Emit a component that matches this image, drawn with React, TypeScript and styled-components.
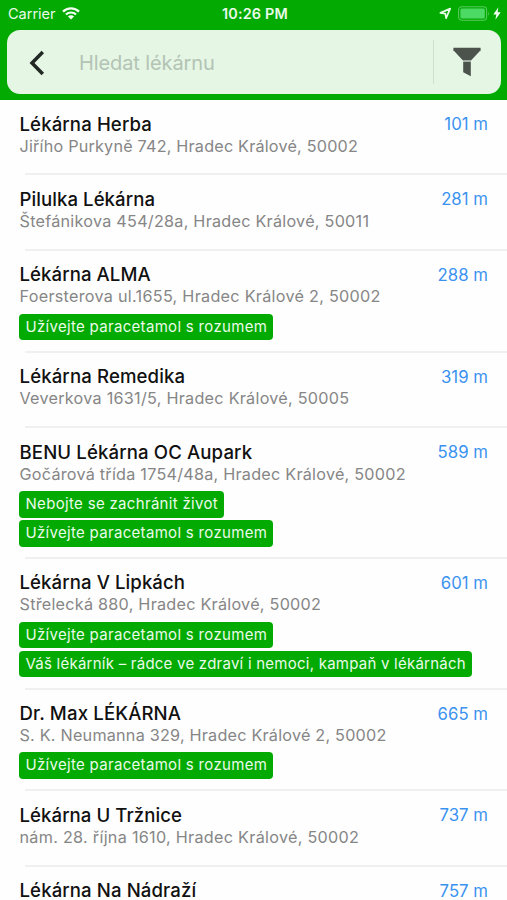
import React from 'react';
import styled, { createGlobalStyle } from 'styled-components';

const GlobalStyle = createGlobalStyle`
  * { box-sizing: border-box; }
  body {
    margin: 0;
    background: #fff;
    font-family: Inter, 'Liberation Sans', sans-serif;
    overflow: hidden;
  }
`;

const Screen = styled.div`
  width: 507px;
  height: 900px;
  overflow: hidden;
  background: #fefefe;
`;

const Header = styled.header`
  height: 100px;
  background: #02aa02;
  padding: 0 6px 0 7px;
`;

const StatusBar = styled.div`
  display: grid;
  grid-template-columns: 1fr auto 1fr;
  align-items: center;
  height: 30px;
  padding: 0 0 3px 1px;
  color: #e9fbe9;
  font-size: 14.6px;
  line-height: 18px;
`;

const Carrier = styled.div`
  display: flex;
  align-items: center;
  gap: 6px;
  letter-spacing: -0.05px;
`;

const Clock = styled.div`
  padding-left: 1px;
  font-weight: 600;
  font-size: 14.4px;
  letter-spacing: 0.2px;
`;

const StatusIcons = styled.div`
  display: flex;
  justify-content: flex-end;
  align-items: center;
`;

const BatterySlot = styled.span`
  display: flex;
  margin: 0 3px 0 6px;
`;

const SearchBar = styled.div`
  display: flex;
  align-items: center;
  height: 64px;
  border-radius: 13px;
  background: #e5f6e5;
`;

const BackButton = styled.button`
  width: 60px;
  height: 64px;
  padding: 1px 1px 0 0;
  border: 0;
  background: none;
  display: flex;
  align-items: center;
  justify-content: center;
`;

const Placeholder = styled.div`
  flex: 1;
  padding: 1px 0 0 12px;
  color: #b3c3b4;
  font-size: 20px;
  letter-spacing: -0.1px;
`;

const Filter = styled.div`
  width: 68px;
  height: 44px;
  padding-right: 2px;
  border-left: 1px solid #d0e0d0;
  display: flex;
  align-items: center;
  justify-content: center;
`;

const List = styled.ul`
  margin: 0;
  padding: 0;
  list-style: none;
`;

const Row = styled.li<{ $tags: number }>`
  height: ${(p) => (p.$tags === 0 ? 75.4 : 72.8 + p.$tags * 29)}px;
  padding: 12.6px 19px 0 19px;
  background: linear-gradient(#f0f0f0, #f0f0f0) 25px 100% / 100% 2px no-repeat;
`;

const RowTop = styled.div`
  display: flex;
  justify-content: space-between;
  height: 23px;
  line-height: 23px;
`;

const Name = styled.div<{ $spacing: number }>`
  padding-left: 0.5px;
  color: #111;
  font-size: 18.6px;
  font-weight: 500;
  letter-spacing: ${(p) => p.$spacing}px;
  white-space: nowrap;
`;

const Distance = styled.div`
  padding-top: 0.5px;
  color: #3a92f0;
  font-size: 16.8px;
`;

const Address = styled.div<{ $spacing: number }>`
  height: 21px;
  padding-left: 0.5px;
  line-height: 21px;
  color: #868686;
  font-size: 16.2px;
  letter-spacing: ${(p) => p.$spacing}px;
  white-space: nowrap;
`;

const Tags = styled.div`
  display: flex;
  flex-direction: column;
  align-items: flex-start;
  gap: 2.2px;
  padding-top: 6.3px;
`;

const Tag = styled.span<{ $spacing: number }>`
  height: 26.8px;
  line-height: 26.5px;
  padding: 0 6px 0 6.5px;
  border-radius: 4px;
  background: #02aa02;
  color: #eafbe9;
  font-size: 15px;
  letter-spacing: ${(p) => p.$spacing}px;
  white-space: nowrap;
`;

type Pharmacy = {
  name: string;
  address?: string;
  distance: string;
  tags?: string[];
  nameSpacing: number;
  addressSpacing?: number;
};

const PARACETAMOL = 'Užívejte paracetamol s rozumem';
const SAVE_LIFE = 'Nebojte se zachránit život';
const CAMPAIGN = 'Váš lékárník – rádce ve zdraví i nemoci, kampaň v lékárnách';

const tagSpacing: Record<string, number> = {
  [PARACETAMOL]: 0.31,
  [SAVE_LIFE]: 0.32,
  [CAMPAIGN]: 0.24,
};

const pharmacies: Pharmacy[] = [
  { name: 'Lékárna Herba', address: 'Jiřího Purkyně 742, Hradec Králové, 50002', distance: '101 m', nameSpacing: 0.11, addressSpacing: 0.2 },
  { name: 'Pilulka Lékárna', address: 'Štefánikova 454/28a, Hradec Králové, 50011', distance: '281 m', nameSpacing: 0.06, addressSpacing: 0.25 },
  { name: 'Lékárna ALMA', address: 'Foersterova ul.1655, Hradec Králové 2, 50002', distance: '288 m', tags: [PARACETAMOL], nameSpacing: 0.07, addressSpacing: 0.28 },
  { name: 'Lékárna Remedika', address: 'Veverkova 1631/5, Hradec Králové, 50005', distance: '319 m', nameSpacing: 0.12, addressSpacing: 0.26 },
  { name: 'BENU Lékárna OC Aupark', address: 'Gočárová třída 1754/48a, Hradec Králové, 50002', distance: '589 m', tags: [SAVE_LIFE, PARACETAMOL], nameSpacing: 0.12, addressSpacing: 0.24 },
  { name: 'Lékárna V Lipkách', address: 'Střelecká 880, Hradec Králové, 50002', distance: '601 m', tags: [PARACETAMOL, CAMPAIGN], nameSpacing: 0.08, addressSpacing: 0.25 },
  { name: 'Dr. Max LÉKÁRNA', address: 'S. K. Neumanna 329, Hradec Králové 2, 50002', distance: '665 m', tags: [PARACETAMOL], nameSpacing: 0.13, addressSpacing: 0.22 },
  { name: 'Lékárna U Tržnice', address: 'nám. 28. října 1610, Hradec Králové, 50002', distance: '737 m', nameSpacing: 0.06, addressSpacing: 0.28 },
  { name: 'Lékárna Na Nádraží', distance: '757 m', nameSpacing: 0.1 },
];

const WifiIcon = () => (
  <svg width="18" height="13" viewBox="0 0 18 13" fill="none" stroke="#f2fff2">
    <path d="M1 4.6 A11.4 11.4 0 0 1 17 4.6" strokeWidth="2.3" />
    <path d="M3.9 7.5 A7.4 7.4 0 0 1 14.1 7.5" strokeWidth="2.1" />
    <path d="M9 12.6 L5.9 9.5 A4.4 4.4 0 0 1 12.1 9.5 Z" fill="#f2fff2" stroke="none" />
  </svg>
);

const LocationIcon = () => (
  <svg width="13" height="13" viewBox="0 0 13 13" fill="none" stroke="#e9fbe9" strokeWidth="1.7" strokeLinejoin="round">
    <path d="M1.4 5.9 L11.2 1.6 L7.1 11.2 L6.3 6.6 Z" />
  </svg>
);

const BatteryIcon = () => (
  <svg width="32" height="15" viewBox="0 0 32 15">
    <rect x="0.6" y="0.8" width="28" height="13.4" rx="3.2" fill="none" stroke="#57c95d" strokeWidth="1.1" />
    <rect x="2.4" y="2.6" width="24.4" height="9.8" rx="1.5" fill="#4cd964" />
    <path d="M30 5.2 Q31.6 7.5 30 9.8 Z" fill="#57c95d" />
  </svg>
);

const BoltIcon = () => (
  <svg width="8" height="13" viewBox="0 0 8 13">
    <path d="M5.4 0.2 L0.3 7.4 H3.3 L2.4 12.8 L7.7 5.3 H4.6 Z" fill="#f2fff2" />
  </svg>
);

const BackIcon = () => (
  <svg width="16" height="26" viewBox="0 0 16 26">
    <path d="M13.8 2 L3 13 L13.8 24" fill="none" stroke="#222823" strokeWidth="3.5" />
  </svg>
);

const FunnelIcon = () => (
  <svg width="28" height="30" viewBox="0 0 28 30" fill="#4c534d">
    <path d="M0.4 0.8 H27.6 V3.2 L18 13.5 H10 L0.4 3.2 Z" />
    <path d="M10.2 13.5 H18 V15 H10.2 Z" fill="#a9b4aa" />
    <path d="M10.2 15 H17.8 V29.2 L10.2 25.2 Z" />
  </svg>
);

export default function App() {
  return (
    <Screen>
      <GlobalStyle />
      <Header>
        <StatusBar>
          <Carrier>
            Carrier
            <WifiIcon />
          </Carrier>
          <Clock>10:26 PM</Clock>
          <StatusIcons>
            <LocationIcon />
            <BatterySlot>
              <BatteryIcon />
            </BatterySlot>
            <BoltIcon />
          </StatusIcons>
        </StatusBar>
        <SearchBar>
          <BackButton aria-label="Zpět">
            <BackIcon />
          </BackButton>
          <Placeholder>Hledat lékárnu</Placeholder>
          <Filter>
            <FunnelIcon />
          </Filter>
        </SearchBar>
      </Header>
      <List>
        {pharmacies.map((p) => (
          <Row key={p.name} $tags={p.tags?.length ?? 0}>
            <RowTop>
              <Name $spacing={p.nameSpacing}>{p.name}</Name>
              <Distance>{p.distance}</Distance>
            </RowTop>
            {p.address && <Address $spacing={p.addressSpacing ?? 0}>{p.address}</Address>}
            {p.tags && (
              <Tags>
                {p.tags.map((t) => (
                  <Tag key={t} $spacing={tagSpacing[t]}>{t}</Tag>
                ))}
              </Tags>
            )}
          </Row>
        ))}
      </List>
    </Screen>
  );
}
